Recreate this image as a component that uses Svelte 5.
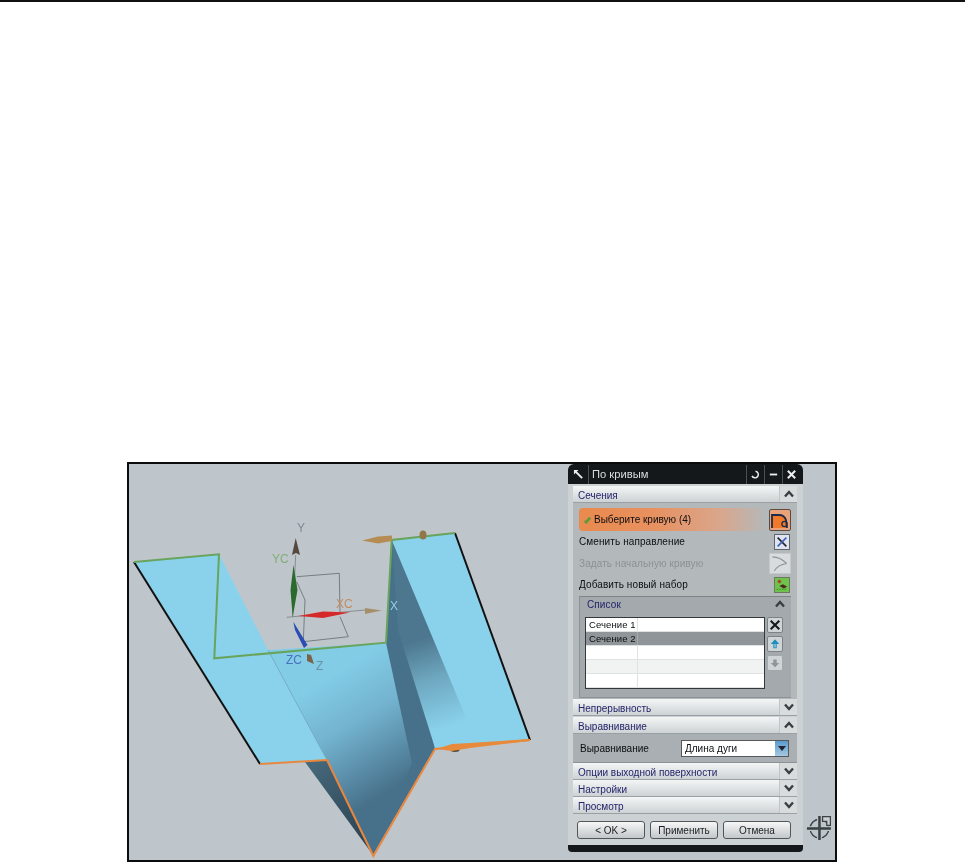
<script>
	const topSections = ['Непрерывность'];
	const bottomSections = ['Опции выходной поверхности', 'Настройки', 'Просмотр'];
	const listRows = [
		{ name: 'Сечение 1', cls: '' },
		{ name: 'Сечение 2', cls: 'selected' },
		{ name: '', cls: '' },
		{ name: '', cls: 'alt' },
		{ name: '', cls: '' }
	];
</script>

{#snippet chevron(up)}
	<svg class="chevron" viewBox="0 0 10 8" aria-hidden="true">
		<path d={up ? 'M1 6.5 5 2l4 4.5' : 'M1 1.5 5 6l4-4.5'} />
	</svg>
{/snippet}

{#snippet header(title, up)}
	<div class="section-header">
		<span>{title}</span>
		<div class="toggle">{@render chevron(up)}</div>
	</div>
{/snippet}

<div class="rule"></div>

<div class="figure">
	<svg class="scene" viewBox="129 464 439 396" aria-label="3D модель">
		<defs>
			<linearGradient id="center" gradientUnits="userSpaceOnUse" x1="325" y1="680" x2="392" y2="790">
				<stop offset="0" stop-color="#82cce6" />
				<stop offset="0.4" stop-color="#73b3cf" />
				<stop offset="1" stop-color="#47708a" />
			</linearGradient>
			<linearGradient id="wall" gradientUnits="userSpaceOnUse" x1="418" y1="640" x2="448" y2="728">
				<stop offset="0" stop-color="#4d778e" />
				<stop offset="0.45" stop-color="#6ea8c0" />
				<stop offset="1" stop-color="#8ad2ec" />
			</linearGradient>
			<linearGradient id="under" gradientUnits="userSpaceOnUse" x1="310" y1="765" x2="360" y2="840">
				<stop offset="0" stop-color="#45677a" />
				<stop offset="1" stop-color="#2c4656" />
			</linearGradient>
		</defs>

		<!-- surfaces -->
		<polygon points="305,762 327,759 373,855" fill="url(#under)" />
		<polygon points="134,562 219,554 268,650 327,760 260,764" fill="#8ad2ec" />
		<polygon points="391.7,540 455,533 530,740 435,748" fill="#8ad2ec" />
		<polygon points="386,642.7 391.7,540 435,748 373,855" fill="#47708a" />
		<polygon points="391.7,540 470,727 435,748 398,630" fill="url(#wall)" />
		<polygon points="268,650 386,642.7 412,763 373,855 327,760" fill="url(#center)" />
		<line x1="268" y1="650" x2="327" y2="760" stroke="#6fa6bd" stroke-width="0.8" />

		<!-- triad box -->
		<g class="thin">
			<path d="M296.7 576.7 339.3 573.3 340 613" />
			<path d="M296.7 581.7 305 600 303.3 641.7 348.3 636.7 340 616.7" />
		</g>
		<line x1="286.7" y1="617.3" x2="365" y2="610" stroke="#77807f" stroke-width="0.8" />
		<line x1="295.7" y1="555" x2="292.7" y2="617" stroke="#77807f" stroke-width="0.8" />
		<polygon points="293.5,565 297.5,590 292.7,617 290.5,590" fill="#2a6a2c" />
		<polygon points="298.3,616 323,611.5 350,612.5 323,618" fill="#d62a2a" />
		<polygon points="293.3,621.7 307.5,645 304,648 295,630" fill="#2a4cb4" />
		<polygon points="295.7,538 300,555 296,553 292,555" fill="#57483e" />
		<polygon points="365,608 381.7,610.5 365,614" fill="#a58f68" />
		<polygon points="307,654 311,655 314,664 307,661" fill="#7c6248" />

		<!-- edges -->
		<path class="edge black" d="M134 562 260 764" />
		<path class="edge black" d="M455 533 530 740" />
		<path class="edge green" d="M134 562 219 554.3 214.3 658.3 386 642.7 391.7 540 455 533" />
		<path class="edge orange" d="M260 764 327 760 373.3 856 435 749 530 740" />

		<!-- handles -->
		<polygon points="362,540.5 378,536.5 392,535.5 392,541 378,543.5" fill="#b68c55" />
		<ellipse cx="423" cy="535" rx="3.5" ry="4.5" fill="#8f7748" />
		<ellipse cx="455" cy="749.5" rx="4.5" ry="2.5" fill="#5a4a38" />
		<polygon points="436,749 452,744 470,743 530,739 530,741 470,748 452,751" fill="#e88a3c" />

		<text x="297" y="532" class="axis" fill="#7b8a90">Y</text>
		<text x="272" y="563" class="axis" fill="#7fae78">YC</text>
		<text x="336" y="608" class="axis" fill="#c08c62">XC</text>
		<text x="390" y="610" class="axis" fill="#93d0e6">X</text>
		<text x="286" y="664" class="axis" fill="#4a72c0">ZC</text>
		<text x="316" y="670" class="axis" fill="#6a92a6">Z</text>
	</svg>

	<div class="dialog">
		<div class="titlebar">
			<div class="tb-cell pin">
				<svg viewBox="0 0 12 12" aria-hidden="true"><path d="M3 3 10 10" stroke="#eee" stroke-width="2" /><path d="M1 1h5L1 6z" fill="#eee" /></svg>
			</div>
			<div class="title">По кривым</div>
			<div class="tb-cell">
				<svg viewBox="0 0 12 12" aria-hidden="true"><path d="M6 2.5a3.6 3.6 0 1 1-3.8 5" fill="none" stroke="#eee" stroke-width="1.6" /></svg>
			</div>
			<div class="tb-cell">
				<svg viewBox="0 0 12 12" aria-hidden="true"><path d="M2 6h8" stroke="#eee" stroke-width="2" /></svg>
			</div>
			<div class="tb-cell">
				<svg viewBox="0 0 12 12" aria-hidden="true"><path d="M2 2l8 8M10 2l-8 8" stroke="#eee" stroke-width="2.2" /></svg>
			</div>
		</div>

		<div class="body">
			{@render header('Сечения', true)}
			<div class="panel">
				<div class="select-row">
					<div class="select-bar">
						<svg class="check" viewBox="0 0 10 10" aria-hidden="true"><path d="M2 6.5 3.5 8 8 3" fill="none" stroke="#5f9a3a" stroke-width="3" /></svg>
						<span>Выберите кривую (4)</span>
					</div>
					<div class="icon-btn curve">
						<svg viewBox="0 0 20 20" aria-hidden="true">
							<path d="M2 18V5h7c4 0 6 2 7 5l1 8z" fill="#f07a2a" />
							<path d="M2 18V5h7c4 0 6 2 7 5l1 8" fill="none" stroke="#1e2a4a" stroke-width="1.8" />
							<circle cx="14.5" cy="14" r="2.6" fill="none" stroke="#1e2a4a" stroke-width="1.3" />
						</svg>
					</div>
				</div>
				<div class="row">
					<span>Сменить направление</span>
					<div class="icon-btn small">
						<svg viewBox="0 0 16 16" aria-hidden="true">
							<rect width="16" height="16" fill="#dfe4f2" />
							<path d="M3 3l10 10" stroke="#222" stroke-width="1.8" />
							<path d="M13 3 3 13" stroke="#3a62b8" stroke-width="1.8" />
						</svg>
					</div>
				</div>
				<div class="row disabled">
					<span>Задать начальную кривую</span>
					<div class="icon-btn faded">
						<svg viewBox="0 0 20 20" aria-hidden="true">
							<path d="M2 3c6 0 11 3 15 7M17 10C11 11 6 14 4 18" fill="none" stroke="#8d9294" stroke-width="1.2" />
						</svg>
					</div>
				</div>
				<div class="row">
					<span>Добавить новый набор</span>
					<div class="icon-btn add">
						<svg viewBox="0 0 16 16" aria-hidden="true">
							<rect width="16" height="16" fill="#6fc24a" />
							<path d="M3 4h4M5 2v4" stroke="#b5342a" stroke-width="1.8" />
							<path d="M5 9l4-2 5 3-4 2z" fill="#4a2a20" />
							<path d="M2 13h12" stroke="#2f7a2a" stroke-width="1" stroke-dasharray="1.5 1.5" />
						</svg>
					</div>
				</div>

				<div class="list-panel">
					<div class="list-header">
						<span>Список</span>
						{@render chevron(true)}
					</div>
					<div class="list-wrap">
						<div class="table">
							{#each listRows as row}
								<div class="table-row {row.cls}">
									<div class="cell-name">{row.name}</div>
									<div class="cell-rest"></div>
								</div>
							{/each}
						</div>
						<div class="list-actions">
							<div class="list-btn">
								<svg viewBox="0 0 14 14" aria-hidden="true"><path d="M2 2l10 10M12 2 2 12" stroke="#15181a" stroke-width="2.4" /></svg>
							</div>
							<div class="list-btn">
								<svg viewBox="0 0 14 14" aria-hidden="true"><path d="M7 1.5 12 7H9v5H5V7H2z" fill="#1f8fbe" /><path d="M7 7v4" stroke="#e8f4fa" stroke-width="1" /></svg>
							</div>
							<div class="list-btn off">
								<svg viewBox="0 0 14 14" aria-hidden="true"><path d="M7 12 2 7h3V3h4v4h3z" fill="#8f9698" /></svg>
							</div>
						</div>
					</div>
				</div>
			</div>

			{#each topSections as title}
				{@render header(title, false)}
			{/each}
			<div class="gap"></div>
			{@render header('Выравнивание', true)}
			<div class="align-panel">
				<span>Выравнивание</span>
				<div class="combo">
					<span>Длина дуги</span>
					<div class="combo-btn"><svg viewBox="0 0 10 8" aria-hidden="true"><path d="M1 2h8L5 7z" fill="#223" /></svg></div>
				</div>
			</div>
			{#each bottomSections as title}
				{@render header(title, false)}
			{/each}

			<div class="footer">
				<button type="button">&lt; OK &gt;</button>
				<button type="button">Применить</button>
				<button type="button">Отмена</button>
			</div>
		</div>
		<div class="bottombar"></div>
	</div>

	<div class="side">
		<svg viewBox="0 0 24 24" aria-hidden="true">
			<circle cx="11" cy="13" r="9" fill="none" stroke="#3d4245" stroke-width="1.4" />
			<path d="M11 1v23M-1 13h23" stroke="#bfc6cb" stroke-width="4.6" />
			<path d="M11 1v23M-1 13h23" stroke="#3a3f42" stroke-width="2.4" />
			<path d="M11 13h.1" stroke="#e4e8ea" stroke-width="2" />
			<path d="M14 6V1.5h7.5V10H18V6z" fill="#c9cfd3" stroke="#3d4245" stroke-width="1.2" />
		</svg>
	</div>
</div>

<style>
	:global(body) {
		background: #fff;
	}

	.rule {
		height: 2px;
		background: #111;
	}

	.figure {
		display: flex;
		box-sizing: border-box;
		width: 710px;
		height: 400px;
		margin: 460px 0 0 127px;
		border: 2px solid #0c0c0c;
		background: #bfc6cb;
		font-family: 'Liberation Sans', Arial, sans-serif;
		filter: blur(0.35px);
	}

	.scene {
		flex: 0 0 439px;
		height: 396px;
	}

	.thin path {
		fill: none;
		stroke: #6f7678;
		stroke-width: 0.9;
	}

	.edge {
		fill: none;
		stroke-width: 2;
		stroke-linejoin: miter;
	}

	.black {
		stroke: #111;
	}

	.green {
		stroke: #68a45c;
	}

	.orange {
		stroke: #e9873f;
	}

	.axis {
		font-size: 12px;
		font-family: 'Liberation Sans', Arial, sans-serif;
	}

	.dialog {
		flex: 0 0 235px;
		display: flex;
		flex-direction: column;
		height: 388px;
		background: #ccd2d4;
		border-radius: 6px 6px 4px 4px;
	}

	.titlebar {
		display: flex;
		align-items: stretch;
		height: 20px;
		padding: 1px 3px 0 0;
		box-sizing: border-box;
		background: #14181b;
		border-radius: 6px 6px 0 0;
		color: #d9dde0;
	}

	.tb-cell {
		display: flex;
		align-items: center;
		justify-content: center;
		width: 17px;
		border-left: 1px solid #4b5054;
	}

	.tb-cell svg {
		width: 11px;
		height: 11px;
	}

	.tb-cell.pin {
		width: 20px;
		border-left: none;
		border-right: 1px solid #4b5054;
	}

	.title {
		flex: 1;
		padding-left: 3px;
		font-size: 11.2px;
		line-height: 18px;
	}

	.body {
		flex: 1;
		padding: 2px 6px 0 5px;
	}

	.section-header {
		display: flex;
		align-items: center;
		justify-content: space-between;
		height: 17px;
		padding: 2px 0 0 5px;
		background: linear-gradient(#f4f6f6, #cdd2d4);
		border-bottom: 1px solid #9aa0a3;
		box-sizing: border-box;
		color: #24246a;
		font-size: 10px;
	}

	.toggle {
		display: flex;
		align-items: center;
		justify-content: center;
		width: 17px;
		height: 16px;
		margin-top: -2px;
		border-left: 1px solid #c0c5c7;
		background: #d8dcdd;
	}

	.chevron {
		width: 10px;
		height: 8px;
	}

	.chevron path {
		fill: none;
		stroke: #383e44;
		stroke-width: 2.4;
	}

	.panel {
		box-sizing: border-box;
		height: 196px;
		padding: 5px 6px 0;
		background: #b3b9bb;
		color: #0c0e10;
		font-size: 10px;
		letter-spacing: 0.1px;
	}

	.select-row,
	.row {
		display: flex;
		align-items: center;
		justify-content: space-between;
	}

	.select-row {
		height: 23px;
		gap: 2px;
	}

	.select-bar {
		flex: 1;
		display: flex;
		align-items: center;
		gap: 2px;
		height: 23px;
		padding-left: 4px;
		border-radius: 4px;
		letter-spacing: 0;
		background: linear-gradient(90deg, #e98a4e 0%, #e89160 40%, #d9a68c 75%, #b3b9bb 100%);
	}

	.check {
		width: 9px;
		height: 9px;
	}

	.icon-btn {
		flex: none;
		box-sizing: border-box;
		display: flex;
		align-items: center;
		justify-content: center;
	}

	.icon-btn svg {
		display: block;
		width: 100%;
		height: 100%;
	}

	.icon-btn.curve {
		width: 22px;
		height: 22px;
		border: 1px solid #5d4a40;
		border-radius: 2px;
		background: #e9a37a;
	}

	.icon-btn.small {
		width: 16px;
		height: 16px;
		margin-right: 1px;
		border: 1px solid #60666a;
	}

	.icon-btn.faded {
		width: 22px;
		height: 21px;
		background: #d8dcdd;
		border: 1px solid #c4c8ca;
	}

	.icon-btn.add {
		width: 16px;
		height: 16px;
		margin-right: 1px;
		border: 1px solid #6a7a5e;
	}

	.row {
		height: 21.5px;
	}

	.disabled {
		color: #8b9194;
	}

	.list-panel {
		box-sizing: border-box;
		height: 102px;
		padding: 0 5px;
		background: #a3a9ac;
		border-top: 1px solid #7e8487;
		border-bottom: 1px solid #8b9194;
		border-left: 1px solid #8b9194;
	}

	.list-header {
		display: flex;
		align-items: center;
		justify-content: space-between;
		height: 15px;
		padding: 0 1px 0 2px;
		color: #24246a;
	}

	.list-wrap {
		display: flex;
		gap: 2px;
		margin-top: 5px;
	}

	.table {
		box-sizing: border-box;
		width: 180px;
		height: 72px;
		background: #fff;
		border: 1px solid #34383a;
	}

	.table-row {
		display: flex;
		height: 14.2px;
		line-height: 14px;
		font-size: 9.5px;
		border-bottom: 1px solid #e0e3e4;
		box-sizing: border-box;
	}

	.table-row.selected {
		background: #8f9598;
	}

	.table-row.alt {
		background: #f1f2f2;
	}

	.cell-name {
		width: 52px;
		padding-left: 3px;
		border-right: 1px solid #dfe2e3;
		box-sizing: border-box;
	}

	.selected .cell-name {
		border-right-color: #a4a9ab;
	}

	.cell-rest {
		flex: 1;
	}

	.list-actions {
		display: flex;
		flex-direction: column;
		gap: 3px;
	}

	.list-btn {
		box-sizing: border-box;
		width: 16px;
		height: 16px;
		padding: 1px;
		background: #cfd4d6;
		border: 1px solid #7c8285;
		border-radius: 2px;
	}

	.list-btn.off {
		border-color: #a3a9ac;
	}

	.list-btn svg {
		display: block;
	}

	.gap {
		height: 1px;
	}

	.align-panel {
		display: flex;
		align-items: center;
		justify-content: space-between;
		box-sizing: border-box;
		height: 29px;
		padding: 0 8px 0 7px;
		background: #a9afb2;
		border-bottom: 1px solid #8b9194;
		color: #0c0e10;
		font-size: 10px;
	}

	.combo {
		display: flex;
		align-items: center;
		justify-content: space-between;
		box-sizing: border-box;
		width: 108px;
		height: 17px;
		padding-left: 3px;
		background: #fff;
		border: 1px solid #55595c;
	}

	.combo-btn {
		width: 13px;
		height: 15px;
		display: flex;
		align-items: center;
		justify-content: center;
		background: linear-gradient(#5b9bcf, #a5c8e0);
	}

	.combo-btn svg {
		width: 10px;
		height: 8px;
	}

	.footer {
		display: flex;
		justify-content: space-between;
		padding: 7px 6px 0 4px;
	}

	.footer button {
		width: 68px;
		height: 18px;
		padding: 0;
		background: linear-gradient(#f6f7f7, #c2c7c9);
		border: 1px solid #50565a;
		border-radius: 3px;
		color: #1c1f21;
		font: 10px 'Liberation Sans', Arial, sans-serif;
	}

	.bottombar {
		height: 7px;
		background: #14181b;
		border-radius: 0 0 4px 4px;
	}

	.side {
		flex: 1;
		display: flex;
		align-items: flex-end;
		padding: 0 0 20px 4.5px;
	}

	.side svg {
		width: 25px;
		height: 25px;
		overflow: visible;
	}
</style>
